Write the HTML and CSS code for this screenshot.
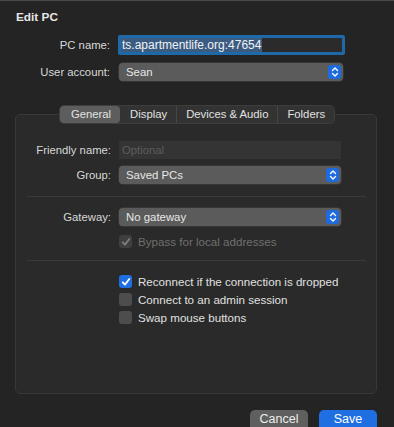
FILE: index.html
```html
<!DOCTYPE html>
<html lang="en">
<head>
  <meta charset="UTF-8" />
  <meta name="viewport" content="width=device-width, initial-scale=1" />
  <title>Edit PC</title>
  <link rel="stylesheet" href="styles.css">
</head>
<body>
  <div class="dialog">
    <h1 class="title">Edit PC</h1>

    <div class="row row-top">
      <label class="label">PC name:</label>
      <div class="text-field focused"><span class="selected">ts.apartmentlife.org:47654</span></div>
    </div>
    <div class="row row-top">
      <label class="label">User account:</label>
      <div class="popup wide">
        <span>Sean</span>
        <span class="stepper"><svg width="10" height="12" viewBox="0 0 10 12"><path d="M2.5 4.5 L5 2 L7.5 4.5 M2.5 7.5 L5 10 L7.5 7.5" fill="none" stroke="#fff" stroke-width="1.4" stroke-linecap="round" stroke-linejoin="round"/></svg></span>
      </div>
    </div>

    <div class="tabs-wrap">
      <div class="tabs">
        <span class="tab active">General</span>
        <span class="tab">Display</span>
        <span class="tab">Devices &amp; Audio</span>
        <span class="tab">Folders</span>
      </div>
    </div>

    <div class="group-box">
      <div class="row">
        <label class="label">Friendly name:</label>
        <div class="text-field plain"><span class="placeholder">Optional</span></div>
      </div>
      <div class="row gap-7">
        <label class="label">Group:</label>
        <div class="popup">
          <span>Saved PCs</span>
          <span class="stepper"><svg width="10" height="12" viewBox="0 0 10 12"><path d="M2.5 4.5 L5 2 L7.5 4.5 M2.5 7.5 L5 10 L7.5 7.5" fill="none" stroke="#fff" stroke-width="1.4" stroke-linecap="round" stroke-linejoin="round"/></svg></span>
        </div>
      </div>

      <hr class="sep sep-a">

      <div class="row">
        <label class="label">Gateway:</label>
        <div class="popup">
          <span>No gateway</span>
          <span class="stepper"><svg width="10" height="12" viewBox="0 0 10 12"><path d="M2.5 4.5 L5 2 L7.5 4.5 M2.5 7.5 L5 10 L7.5 7.5" fill="none" stroke="#fff" stroke-width="1.4" stroke-linecap="round" stroke-linejoin="round"/></svg></span>
        </div>
      </div>
      <div class="check disabled bypass">
        <span class="box checked"><svg width="12" height="12" viewBox="0 0 12 12"><path d="M2.8 6.3 L5 8.6 L9.3 3" fill="none" stroke="#7d7e7d" stroke-width="1.8" stroke-linecap="round" stroke-linejoin="round"/></svg></span>
        <span>Bypass for local addresses</span>
      </div>

      <hr class="sep sep-b">

      <div class="check first">
        <span class="box on"><svg width="12" height="12" viewBox="0 0 12 12"><path d="M2.8 6.3 L5 8.6 L9.3 3" fill="none" stroke="#fff" stroke-width="1.8" stroke-linecap="round" stroke-linejoin="round"/></svg></span>
        <span>Reconnect if the connection is dropped</span>
      </div>
      <div class="check">
        <span class="box"></span>
        <span>Connect to an admin session</span>
      </div>
      <div class="check">
        <span class="box"></span>
        <span>Swap mouse buttons</span>
      </div>
    </div>

    <div class="buttons">
      <button class="btn">Cancel</button>
      <button class="btn primary">Save</button>
    </div>
  </div>
</body>
</html>
```

FILE: styles.css
```css
html, body {
  margin: 0;
  height: 100%;
  overflow: hidden;
  background: #232423;
  font-family: "Liberation Sans", Arial, sans-serif;
  font-size: 11.3px;
  color: #dedede;
}

body {
  border-top: 1px solid #4a4a4a;
  box-sizing: border-box;
}

.dialog {
  padding: 0 17px 0 15px;
}

.title {
  margin: 0;
  padding: 8px 0 0 1px;
  height: 16px;
  line-height: 16px;
  font-size: 11.8px;
  font-weight: 700;
  color: #e6e6e6;
}

.row {
  display: flex;
  align-items: center;
  height: 18px;
}

.row-top {
  height: 20px;
  margin-top: 7px;
  padding-right: 32px;
}

.row-top:first-of-type {
  margin-top: 10px;
}

.label {
  width: 95px;
  text-align: right;
  padding-right: 8px;
  color: #d8d8d8;
}

.text-field {
  flex: 1;
  height: 18px;
  box-sizing: border-box;
  display: flex;
  align-items: center;
  padding-left: 2px;
}

.text-field.focused {
  height: 20px;
  background: #2a2b2a;
  border: 3px solid #1e6aa8;
  border-radius: 2px;
  padding-left: 0;
  font-size: 12px;
}

.selected {
  background: #3c5b80;
  color: #eef2f7;
  line-height: 14px;
  padding: 0 1px;
}

.text-field.plain {
  background: #333433;
}

.placeholder {
  color: #5d5e5d;
  padding-left: 1px;
}

.popup {
  flex: 1;
  height: 18px;
  box-sizing: border-box;
  background: #5a5b5a;
  border-radius: 4px;
  display: flex;
  align-items: center;
  justify-content: space-between;
  padding: 0 2px 0 7px;
  color: #e8e8e8;
  box-shadow: 0 0 0 0.5px #444;
  font-size: 11.4px;
}

.popup.wide {
  margin: 0 2px 0 1px;
}

.stepper {
  width: 13px;
  height: 14px;
  border-radius: 3px;
  background: #1e6be0;
  display: flex;
  align-items: center;
  justify-content: center;
}

.tabs-wrap {
  display: flex;
  justify-content: center;
  margin-top: 23px;
  margin-bottom: -10px;
  position: relative;
  z-index: 1;
  padding-left: 2px;
}

.tabs {
  display: flex;
  align-items: center;
  height: 19px;
  background: #323332;
  border: 1px solid #3c3d3c;
  border-radius: 5px;
  box-sizing: border-box;
}

.tab {
  padding: 0 9px 0 9px;
  height: 17px;
  line-height: 17px;
  border-left: 1px solid #454645;
  color: #e2e2e2;
  font-size: 11.3px;
}

.tab:first-child,
.tab.active + .tab {
  border-left-color: transparent;
}

.tab.active {
  background: #5c5d5c;
  border-radius: 4px;
  padding: 0 9px 0 10px;
}

.group-box {
  height: 280px;
  box-sizing: border-box;
  background: #292a29;
  border: 1px solid #373837;
  border-radius: 5px;
  padding: 26px 35px 0 0;
}

.gap-7 {
  margin-top: 7px;
}

.sep {
  border: none;
  border-top: 1px solid #3a3b3a;
  margin: 0 -25px 0 11px;
}

.sep-a {
  margin-top: 12px;
  margin-bottom: 11px;
}

.sep-b {
  margin-top: 12px;
  margin-bottom: 14px;
}

.check {
  display: flex;
  align-items: center;
  height: 13px;
  padding-left: 103px;
  gap: 6px;
  color: #e0e0e0;
  margin-top: 5px;
  margin-right: -35px;
  white-space: nowrap;
  font-size: 11.6px;
}

.check.first {
  margin-top: 0;
}

.check.bypass {
  margin-top: 9px;
}

.check.disabled {
  color: #6f706f;
}

.box {
  width: 13px;
  height: 13px;
  box-sizing: border-box;
  border-radius: 3px;
  background: #4c4d4c;
  display: flex;
  align-items: center;
  justify-content: center;
  flex: none;
}

.box.on {
  background: #1f6fe2;
}

.box.checked {
  background: #3e3f3e;
}

.buttons {
  display: flex;
  justify-content: flex-end;
  gap: 11px;
  margin-top: 16px;
}

.btn {
  width: 58px;
  height: 21px;
  border: none;
  border-radius: 5px;
  background: #5e5f5e;
  color: #ececec;
  font-family: inherit;
  font-size: 12.5px;
  padding: 0 0 3px;
}

.btn.primary {
  background: #1f6fe3;
  color: #fff;
}
```
